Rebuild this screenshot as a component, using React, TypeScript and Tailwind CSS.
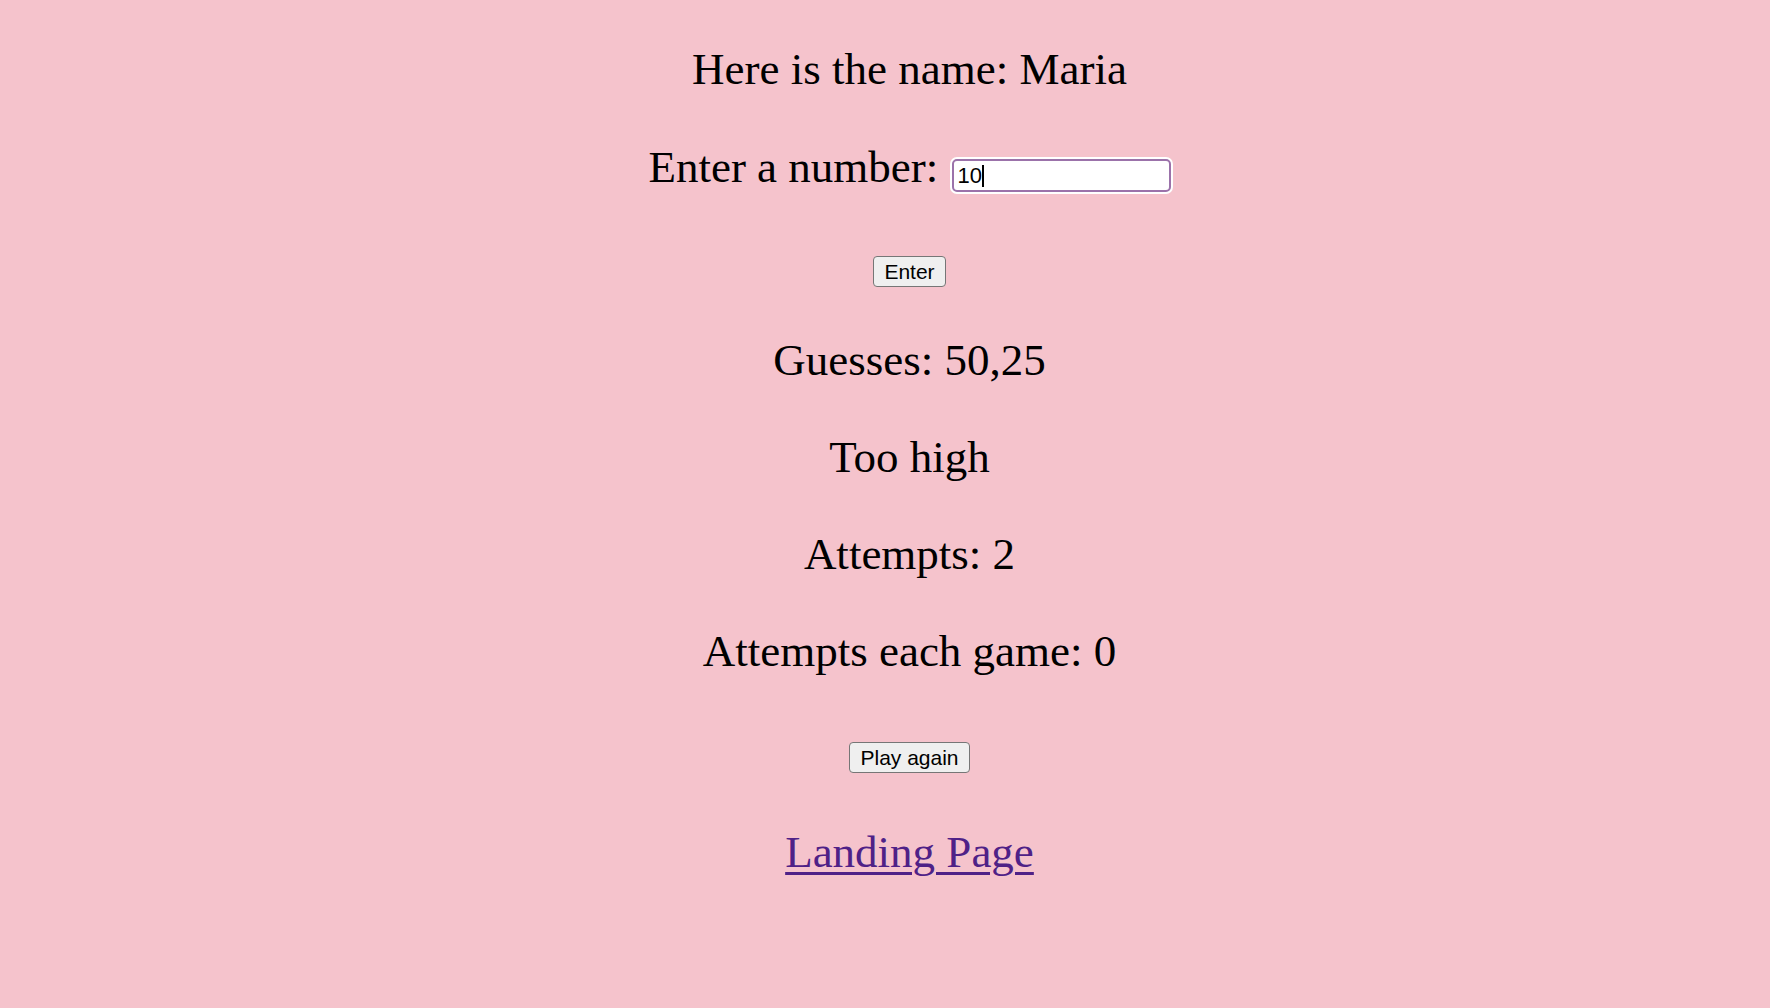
import React from "react";

export default function App() {
  const serif = { fontFamily: '"Liberation Serif", "Times New Roman", serif' };
  const sans = { fontFamily: '"Liberation Sans", Arial, sans-serif' };
  const line = "text-[45px] leading-[48px] text-black whitespace-nowrap";
  const btn =
    "h-[31px] px-[10px] bg-[#efefef] border border-[#767676] rounded-[4px] text-[21px] leading-none text-black";
  return (
    <div
      className="min-h-[1008px] w-full bg-[#f5c3cc] flex flex-col items-center pl-[49px] pt-[45px]"
      style={serif}
    >
      <div className={line}>Here is the name: Maria</div>
      <div className="mt-[50px] flex items-end">
        <span className={line}>Enter a number:&nbsp;</span>
        <div className="mb-[-1px] ml-[2px] w-[219px] h-[33px] rounded-[5px] border-2 border-[#9b72aa] bg-white shadow-[0_0_0_2px_#ffffff] flex items-center px-[4px]">
          <span className="text-[22px] leading-none text-black" style={sans}>
            10
          </span>
          <span className="w-[2px] h-[22px] bg-black" />
        </div>
      </div>
      <button className={`mt-[65px] ${btn}`} style={sans}>
        Enter
      </button>
      <div className={`mt-[49px] ${line}`}>Guesses: 50,25</div>
      <div className={`mt-[49px] ${line}`}>Too high</div>
      <div className={`mt-[49px] ${line}`}>Attempts: 2</div>
      <div className={`mt-[49px] ${line}`}>Attempts each game: 0</div>
      <button className={`mt-[67px] ${btn}`} style={sans}>
        Play again
      </button>
      <a
        href="#"
        className="mt-[55px] text-[45px] leading-[48px] text-[#4f2187] underline decoration-[3px] underline-offset-[5px]"
      >
        Landing Page
      </a>
    </div>
  );
}
